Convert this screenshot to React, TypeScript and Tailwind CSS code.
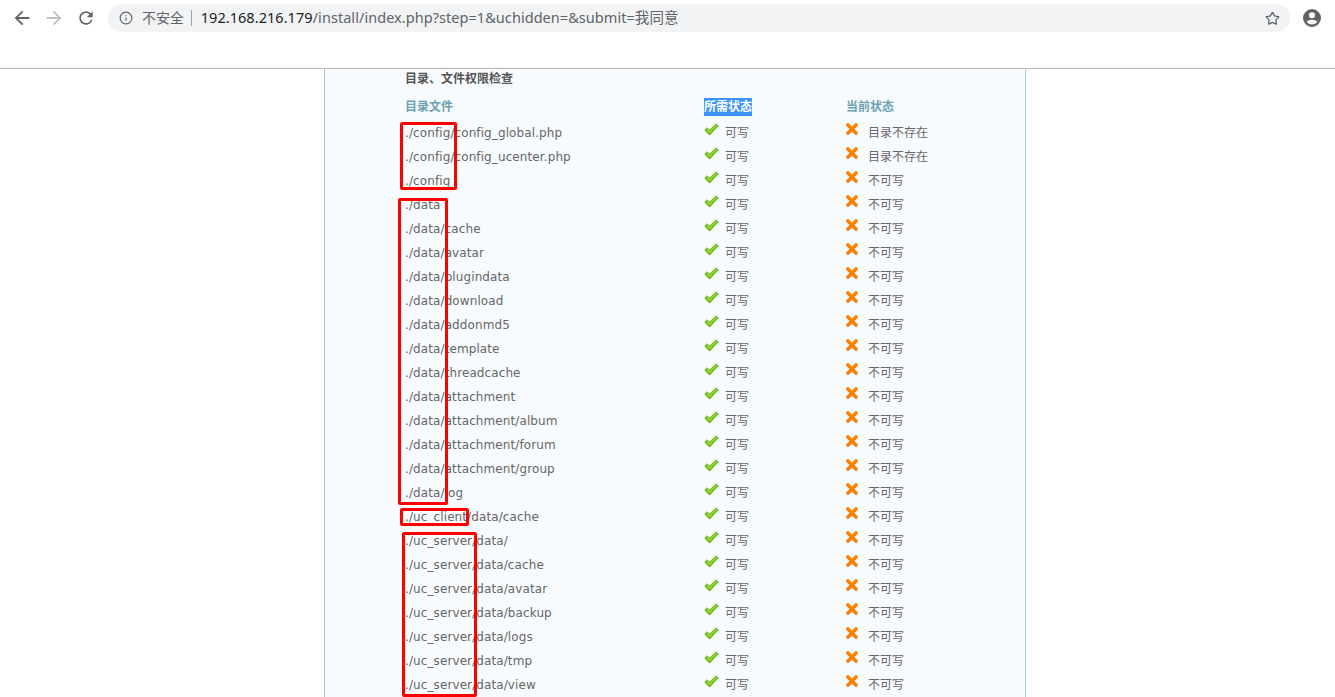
import React from 'react';
import { Info, Star } from 'lucide-react';

const FONT = 'font-["DejaVu_Sans","Noto_Sans_CJK_SC",sans-serif]';

const rows: { path: string; current: string }[] = [
  { path: './config/config_global.php', current: '目录不存在' },
  { path: './config/config_ucenter.php', current: '目录不存在' },
  { path: './config', current: '不可写' },
  { path: './data', current: '不可写' },
  { path: './data/cache', current: '不可写' },
  { path: './data/avatar', current: '不可写' },
  { path: './data/plugindata', current: '不可写' },
  { path: './data/download', current: '不可写' },
  { path: './data/addonmd5', current: '不可写' },
  { path: './data/template', current: '不可写' },
  { path: './data/threadcache', current: '不可写' },
  { path: './data/attachment', current: '不可写' },
  { path: './data/attachment/album', current: '不可写' },
  { path: './data/attachment/forum', current: '不可写' },
  { path: './data/attachment/group', current: '不可写' },
  { path: './data/log', current: '不可写' },
  { path: './uc_client/data/cache', current: '不可写' },
  { path: './uc_server/data/', current: '不可写' },
  { path: './uc_server/data/cache', current: '不可写' },
  { path: './uc_server/data/avatar', current: '不可写' },
  { path: './uc_server/data/backup', current: '不可写' },
  { path: './uc_server/data/logs', current: '不可写' },
  { path: './uc_server/data/tmp', current: '不可写' },
  { path: './uc_server/data/view', current: '不可写' },
];

const CheckIcon = () => (
  <svg width="15" height="13" viewBox="0 0 15 13" className="shrink-0">
    <path d="M0.3 7.2 L2.8 4.4 L5.6 6.6 L12 0.4 L14.7 3 L5.6 12.6 Z" fill="#6fae24" />
    <path d="M1.3 7.1 L2.9 5.400 L5.600 7.600 L12 1.500 L13.500 3 L5.600 10.800 Z" fill="#8ad62f" />
  </svg>
);

const CrossIcon = () => (
  <svg width="12" height="12" viewBox="0 0 12 12" className="shrink-0">
    <path d="M2 2 L10 10 M10 2 L2 10" stroke="#ff7f00" strokeWidth="3.6" strokeLinecap="round" />
  </svg>
);

const BackIcon = ({ className }: { className: string }) => (
  <svg width="22" height="22" viewBox="0 0 24 24" className={className} fill="currentColor">
    <path d="M20 11H7.83l5.59-5.59L12 4l-8 8 8 8 1.41-1.41L7.83 13H20v-2z" />
  </svg>
);

const ForwardIcon = ({ className }: { className: string }) => (
  <svg width="22" height="22" viewBox="0 0 24 24" className={className} fill="currentColor">
    <path d="M4 11h12.17l-5.59-5.59L12 4l8 8-8 8-1.41-1.41L16.170 13H4v-2z" />
  </svg>
);

const ReloadIcon = ({ className }: { className: string }) => (
  <svg width="20" height="20" viewBox="0 0 24 24" className={className} fill="currentColor">
    <path d="M17.65 6.35A7.958 7.958 0 0 0 12 4c-4.42 0-7.99 3.58-7.99 8s3.57 8 7.99 8c3.73 0 6.84-2.55 7.73-6h-2.08A5.99 5.99 0 0 1 12 18c-3.31 0-6-2.69-6-6s2.69-6 6-6c1.66 0 3.14.69 4.22 1.78L13 11h7V4l-2.35 2.35z" />
  </svg>
);

const AccountIcon = () => (
  <svg width="18" height="18" viewBox="0 0 18 18">
    <path
      fillRule="evenodd"
      fill="#5f6368"
      d="M9 0a9 9 0 1 0 0 18A9 9 0 0 0 9 0Zm0 3.2a3 3 0 1 1 0 6 3 3 0 0 1 0-6ZM9 15.6a6.6 6.6 0 0 1-5.4-2.8c.9-1.4 3.5-2.1 5.4-2.1s4.500.7 5.400 2.100A6.600 6.600 0 0 1 9 15.600Z"
    />
  </svg>
);

const RedBox = ({ className }: { className: string }) => (
  <div className={`absolute border-[3px] border-[#ff0000] rounded-[2px] ${className}`} />
);

const BrowserBar = () => (
  <div className="h-[69px] border-b border-[#b4b4b4] bg-white shrink-0">
    <div className="flex items-center h-[36px] pl-[11px] pr-[14px]">
      <BackIcon className="text-[#5f6368] mr-[10px]" />
      <ForwardIcon className="text-[#bcbec1] mr-[11px]" />
      <ReloadIcon className="text-[#5f6368] mr-[12px]" />
      <div className="flex items-center flex-1 h-[28px] rounded-full bg-[#f1f3f4] pl-[11px] pr-[10px]">
        <Info className="w-[14px] h-[14px] text-[#5f6368] mr-[9px]" strokeWidth={2} />
        <span className={`${FONT} text-[14px] text-[#5f6368] tracking-[-0.1px]`}>不安全</span>
        <span className="w-px h-[16px] bg-[#9aa0a6] ml-[7px] mr-[9px]" />
        <span className='font-["Noto_Sans","Noto_Sans_CJK_SC",sans-serif] text-[14.5px] tracking-[0.05px] text-[#5f6368] whitespace-nowrap'>
          <span className="text-[#202124]">192.168.216.179</span>/install/index.php?step=1&amp;uchidden=&amp;submit=我同意
        </span>
        <Star className="w-[15px] h-[15px] text-[#5f6368] ml-auto" strokeWidth={2} />
      </div>
      <div className="ml-[13px]">
        <AccountIcon />
      </div>
    </div>
  </div>
);

export default function App() {
  return (
    <div className={`${FONT} relative flex flex-col w-[1335px] h-[697px] overflow-hidden bg-white`}>
      <BrowserBar />

      <div className="w-[702px] flex-1 ml-[324px] border-x border-[#a8cdd6] bg-[#f7fbfe] pl-[80px] text-[12px] text-[#666666]">
        <h3 className="h-[20px] leading-[20px] font-bold text-[#555555]">目录、文件权限检查</h3>
        <div className="flex items-center h-[32px] pt-[4px] pb-[1px] font-bold text-[#6ca1b3]">
          <span className="w-[299px]">目录文件</span>
          <span className="w-[142px]">
            <span className="bg-[#3a93ff] text-white inline-block leading-[18px]">所需状态</span>
          </span>
          <span>当前状态</span>
        </div>
        {rows.map((row) => (
          <div key={row.path} className="flex items-center h-[24px]">
            <span className="w-[299px] whitespace-nowrap tracking-[0.1px]">{row.path}</span>
            <span className="w-[142px] flex items-center">
              <span className="-mt-[7px]"><CheckIcon /></span>
              <span className="ml-[7px] -translate-x-px">可写</span>
            </span>
            <span className="flex items-center">
              <span className="-mt-[9px]"><CrossIcon /></span>
              <span className="ml-[10px]">{row.current}</span>
            </span>
          </div>
        ))}
      </div>

      {/* Red annotation boxes */}
      <RedBox className="left-[400px] top-[122px] w-[57px] h-[68px]" />
      <RedBox className="left-[398px] top-[198px] w-[50px] h-[307px]" />
      <RedBox className="left-[400px] top-[508px] w-[69px] h-[18px]" />
      <RedBox className="left-[402px] top-[532px] w-[75px] h-[165px]" />
    </div>
  );
}
